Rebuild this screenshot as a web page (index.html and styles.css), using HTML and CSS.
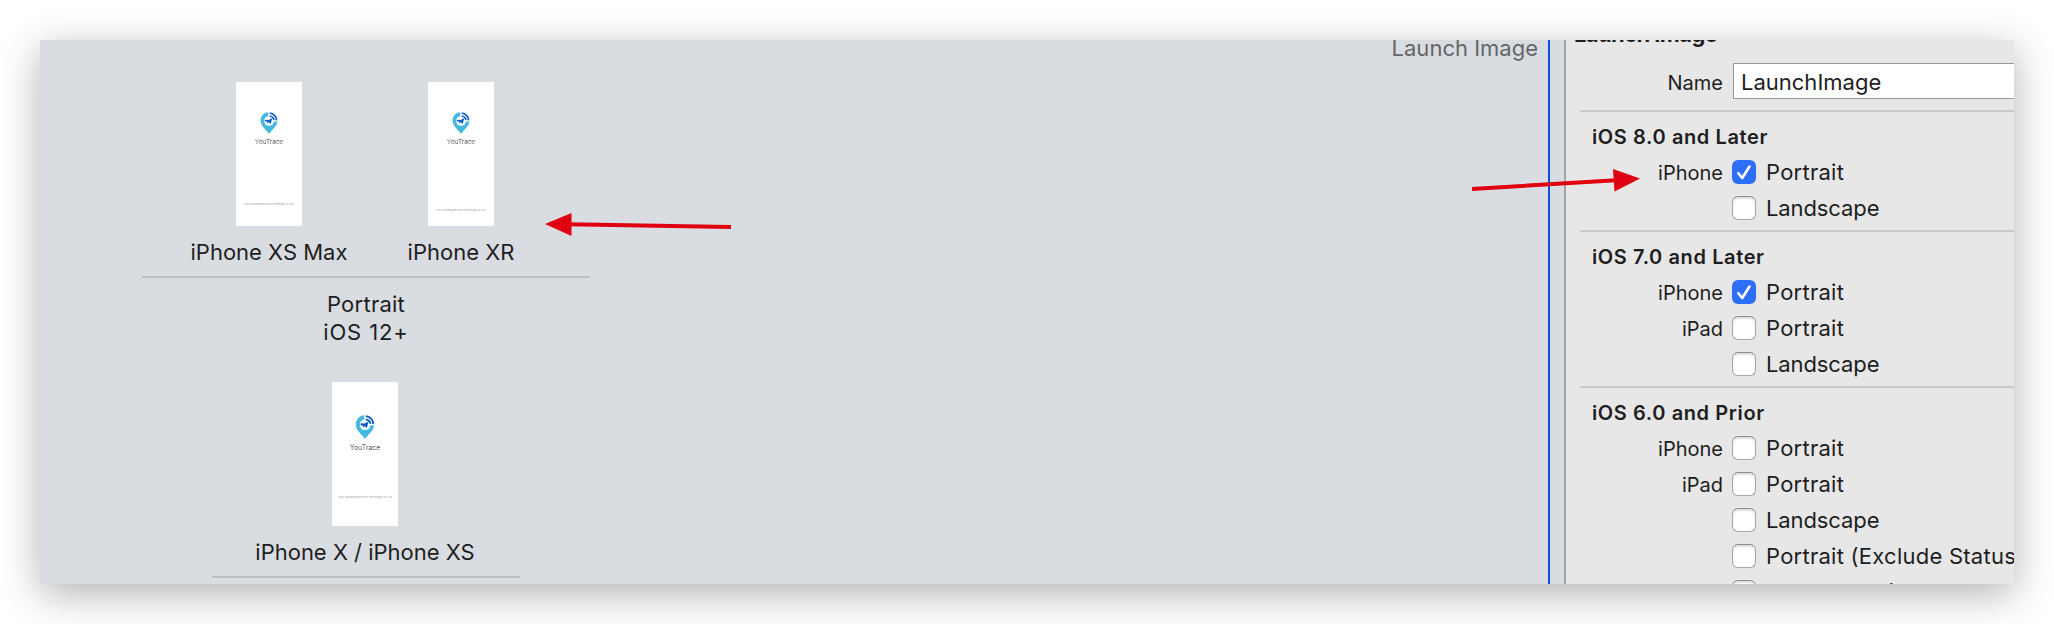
FILE: index.html
```html
<!DOCTYPE html>
<html lang="en">
<head>
<meta charset="utf-8">
<title>Launch Image</title>
<link rel="stylesheet" href="styles.css">
</head>
<body>
<svg class="defs" width="0" height="0" aria-hidden="true">
  <symbol id="pin" viewBox="0 0 36 46">
    <path fill="#43b9e0" d="M16.500 0.500C7 1 0.500 8.500 0.500 18C0.500 29 10 35.500 18 45.500C26 35.500 35 29.500 35.500 20H28A10 10 0 1 1 16.500 9Z"/>
    <path fill="none" stroke="#0e5cc0" stroke-width="3.400" d="M19.500 2.200A16 16 0 0 1 34 17.500M19.500 8.500A10.500 10.500 0 0 1 28.500 17"/>
    <path fill="#0e5cc0" d="M25 12.500L21.500 25L17.500 21.500L14 24L14.500 20.500L9.500 19.500V16L17 16.500Z"/>
  </symbol>
  <symbol id="tick" viewBox="0 0 24 24">
    <path fill="none" stroke="#fff" stroke-width="2.600" stroke-linecap="round" stroke-linejoin="round" d="M6.200 13.200L10.200 18L17.500 6.500"/>
  </symbol>
</svg>
<div class="window">
  <main class="canvas">
    <div class="canvas-title">Launch Image</div>
    <section class="group">
      <div class="slots">
        <figure class="slot">
          <div class="screen"><svg class="pin"><use href="#pin"/></svg><span class="brand">YouTrace</span><span class="company">Wuxi Haoyang Electronic Technology Co.,Ltd</span></div>
          <figcaption>iPhone XS Max</figcaption>
        </figure>
        <figure class="slot">
          <div class="screen low"><svg class="pin"><use href="#pin"/></svg><span class="brand">YouTrace</span><span class="company">Wuxi Haoyang Electronic Technology Co.,Ltd</span></div>
          <figcaption>iPhone XR</figcaption>
        </figure>
      </div>
      <div class="caption"><div class="orientation">Portrait</div><div class="version">iOS 12+</div></div>
    </section>
    <section class="group narrow">
      <div class="slots">
        <figure class="slot wide">
          <div class="screen large"><svg class="pin"><use href="#pin"/></svg><span class="brand">YouTrace</span><span class="company">Wuxi Haoyang Electronic Technology Co.,Ltd</span></div>
          <figcaption>iPhone X / iPhone XS</figcaption>
        </figure>
      </div>
    </section>
  </main>
  <div class="gutter"></div>
  <aside class="inspector">
    <h1 class="title">Launch Image</h1>
    <div class="name-row"><span class="label">Name</span><div class="field">LaunchImage</div></div>
    <section class="options">
      <h2>iOS 8.0 and Later</h2>
      <div class="row"><span class="label">iPhone</span><span class="box on"><svg><use href="#tick"/></svg></span><span class="text portrait">Portrait</span></div>
      <div class="row"><span class="label"></span><span class="box"></span><span class="text">Landscape</span></div>
    </section>
    <section class="options">
      <h2>iOS 7.0 and Later</h2>
      <div class="row"><span class="label">iPhone</span><span class="box on"><svg><use href="#tick"/></svg></span><span class="text portrait">Portrait</span></div>
      <div class="row"><span class="label">iPad</span><span class="box"></span><span class="text portrait">Portrait</span></div>
      <div class="row"><span class="label"></span><span class="box"></span><span class="text">Landscape</span></div>
    </section>
    <section class="options">
      <h2>iOS 6.0 and Prior</h2>
      <div class="row"><span class="label">iPhone</span><span class="box"></span><span class="text portrait">Portrait</span></div>
      <div class="row"><span class="label">iPad</span><span class="box"></span><span class="text portrait">Portrait</span></div>
      <div class="row"><span class="label"></span><span class="box"></span><span class="text">Landscape</span></div>
      <div class="row"><span class="label"></span><span class="box"></span><span class="text portrait">Portrait (Exclude Status</span></div>
      <div class="row"><span class="label"></span><span class="box"></span><span class="text">Landscape (Exclude Stat</span></div>
    </section>
  </aside>
</div>
<svg class="arrows" viewBox="0 0 2054 624" aria-hidden="true">
  <path class="shaft" d="M731 227L568 224.300M1472 189L1616 180.200"/>
  <path class="head" d="M545 224L571.500 213V236ZM1640 178.500L1613 169L1614.500 191.500Z"/>
</svg>
</body>
</html>
```

FILE: styles.css
```css
* { box-sizing: border-box; }

body {
  margin: 0;
  width: 2054px;
  height: 624px;
  padding: 40px;
  overflow: hidden;
  background: #fff;
  color: #1e1e1e;
  font: 22px/24px Inter, "Liberation Sans", sans-serif;
}

h1, h2, figure { margin: 0; }

.defs { position: absolute; }

.window {
  display: flex;
  width: 1974px;
  height: 544px;
  box-shadow: 0 10px 38px rgba(0, 0, 0, 0.3);
}

.canvas {
  width: 1508px;
  height: 544px;
  overflow: hidden;
  background: #d9dce1;
}

.canvas-title {
  height: 42px;
  padding: 4px 10px 0 0;
  margin-top: -8px;
  line-height: 24px;
  text-align: right;
  color: #656667;
}

/* Device groups */
.group {
  width: 448px;
  margin: 8px 0 0 102px;
}

.group.narrow {
  width: 308px;
  margin: 36px 0 0 172px;
}

.slots {
  display: flex;
  justify-content: center;
  height: 196px;
  padding-right: 2px;
  border-bottom: 2px solid #bbbfc4;
}

.slot {
  display: flex;
  flex: none;
  flex-direction: column;
  align-items: center;
  width: 192px;
  white-space: nowrap;
}

.slot.wide { width: 306px; }

.slot figcaption { margin-top: 14px; }

.screen {
  display: flex;
  flex-direction: column;
  align-items: center;
  width: 66px;
  height: 144px;
  padding-top: 30px;
  background: #fff;
}

.screen.large { padding-top: 33px; }

.pin {
  display: block;
  width: 18px;
  height: 22px;
}

.large .pin {
  width: 20px;
  height: 24px;
}

.brand {
  margin-top: 4px;
  font: 300 6.500px/8px Inter, sans-serif;
  color: #333;
}

.large .brand {
  margin-top: 5px;
  font-size: 7px;
}

.company {
  margin-top: 57px;
  font: 2.300px/4px Inter, sans-serif;
  color: #999;
}

.low .company { margin-top: 63px; }

.large .company {
  margin-top: 44px;
  font-size: 2.500px;
}

.caption {
  padding-top: 12px;
  line-height: 28px;
  text-align: center;
}

.orientation { letter-spacing: 0.250px; }

.version { letter-spacing: 0.900px; }

.gutter {
  width: 18px;
  background: #d9dce1;
  border-left: 2px solid #0b4fdc;
  border-right: 2px solid #a2a2a2;
}

/* Inspector */
.inspector {
  width: 448px;
  height: 544px;
  overflow: hidden;
  background: #e7e7e7;
}

.title {
  height: 23px;
  margin-top: -18px;
  padding-left: 8px;
  font-size: 22px;
  font-weight: 700;
  line-height: 24px;
  letter-spacing: -0.600px;
}

.name-row {
  display: flex;
  height: 65px;
  padding-top: 18px;
}

.label {
  flex: none;
  width: 157px;
  margin-right: 9px;
  padding-top: 1px;
  font-size: 20px;
  text-align: right;
}

.name-row .label {
  margin-right: 10px;
  padding-top: 8px;
}

.field {
  flex: none;
  width: 300px;
  height: 36px;
  padding: 6px 7px;
  border: 1px solid #999;
  background: #fff;
}

.options {
  margin-left: 14px;
  padding-bottom: 4px;
  border-top: 2px solid #cacaca;
}

.options h2 {
  height: 42px;
  padding: 13px 0 0 12px;
  font-size: 20px;
  font-weight: 600;
  line-height: 24px;
  letter-spacing: 0.600px;
}

.row {
  display: flex;
  align-items: center;
  height: 36px;
  white-space: nowrap;
}

.row .label {
  width: 143px;
  height: 25px;
}

.box {
  flex: none;
  width: 24px;
  height: 24px;
  margin-right: 10px;
  border: 1px solid #a5a5a5;
  border-top-color: #898989;
  border-radius: 6px;
  background: #fff;
  box-shadow: inset 0 2px 2px rgba(0, 0, 0, 0.13);
}

.box.on {
  border: 0;
  background: #2d6ff8;
  box-shadow: none;
}

.box svg {
  display: block;
  width: 24px;
  height: 24px;
}

.text { letter-spacing: -0.100px; }

.text.portrait { letter-spacing: 0.250px; }

/* Annotations lying over the window */
.arrows {
  position: absolute;
  top: 0;
  left: 0;
  width: 2054px;
  height: 624px;
}

.shaft {
  fill: none;
  stroke: #e0000f;
  stroke-width: 4;
}

.head { fill: #e0000f; }
```
